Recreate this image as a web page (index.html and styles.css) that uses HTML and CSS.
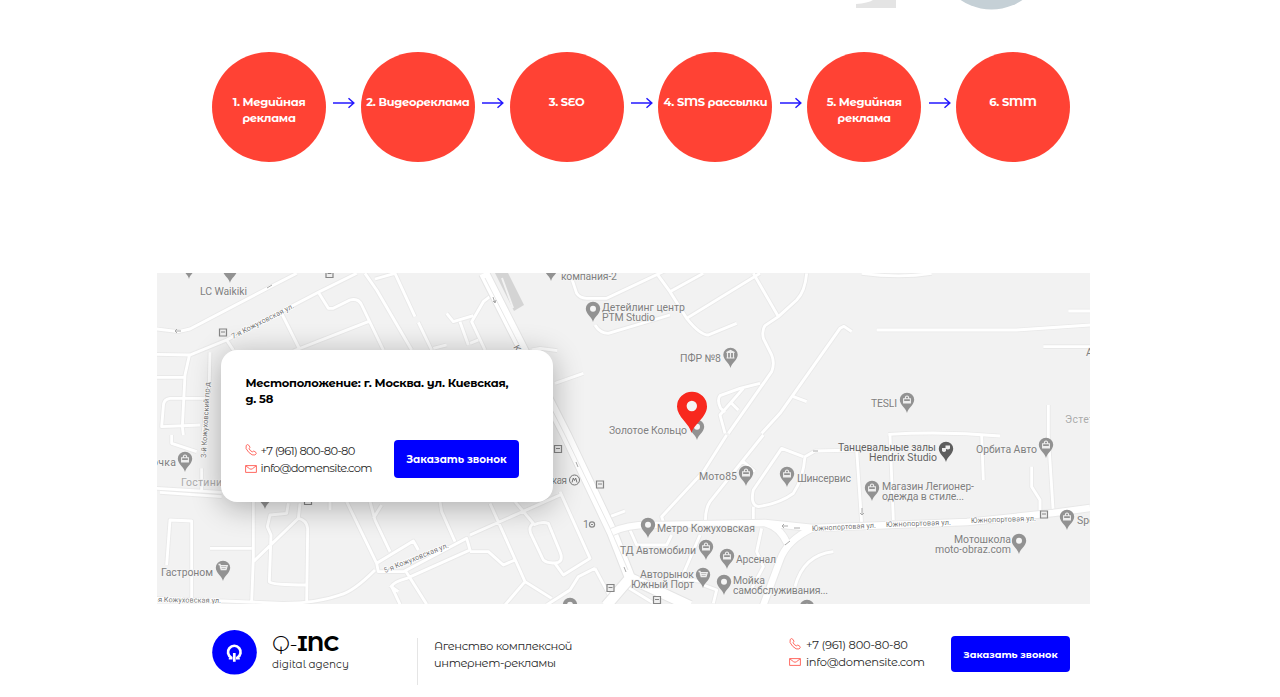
FILE: index.html
```html
<!DOCTYPE html>
<html lang="ru">
<head>
<meta charset="utf-8">
<title>Q-INC digital agency</title>
<link rel="stylesheet" href="styles.css">
</head>
<body>
<svg class="defs" width="0" height="0" aria-hidden="true">
  <symbol id="arrow" viewBox="0 0 22 12"><path d="M0 6H20.500M15.500 1.300L20.800 6L15.500 10.700" fill="none" stroke="#2418ff" stroke-width="1.500"/></symbol>
  <symbol id="phone" viewBox="0 0 12 12"><path d="M1.200 1.500Q2.600-.2 3.700 1.200L4.900 3Q5.200 3.800 4.100 4.600Q4.700 6.600 7.300 7.900Q8.300 6.800 9.100 7.200L11 8.500Q12 9.600 9.900 11Q7.400 12 3.700 8.300Q-.3 4.200 1.200 1.500Z" fill="none" stroke="#ff5950" stroke-width=".9"/></symbol>
  <symbol id="mail" viewBox="0 0 12 8"><path d="M.6.6H11.400V7.400H.6ZM.8.8L4.500 3.700Q6 4.800 7.500 3.700L11.200.8" fill="none" stroke="#ff5950" stroke-width=".9"/></symbol>
</svg>

<header class="artwork">
  <svg width="1280" height="12" viewBox="0 0 1280 12">
    <path d="M856 8V4Q868 3 873 0H896V8Z" fill="#e4e4e4"/>
    <circle cx="991.500" cy="-45.500" r="55" fill="#c5d0d6"/>
  </svg>
</header>

<section class="steps">
  <div class="step">1. Медийная<br>реклама</div>
  <svg class="arrow"><use href="#arrow"/></svg>
  <div class="step">2. Видеореклама</div>
  <svg class="arrow"><use href="#arrow"/></svg>
  <div class="step">3. SEO</div>
  <svg class="arrow"><use href="#arrow"/></svg>
  <div class="step">4. SMS рассылки</div>
  <svg class="arrow"><use href="#arrow"/></svg>
  <div class="step">5. Медийная<br>реклама</div>
  <svg class="arrow"><use href="#arrow"/></svg>
  <div class="step">6. SMM</div>
</section>

<section class="location">
  <svg class="map" viewBox="157 273 933 331">
    <defs>
      <g id="dot"><path d="M0 10C-1 5-7.200 2-7.200-3.200A7.200 7 0 0 1 7.200-3.200C7.200 2 1 5 0 10Z"/><circle cy="-3.300" r="3" fill="#f5f5f5"/></g>
      <g id="bag"><path d="M0 10C-1 5-7.200 2-7.200-3.200A7.200 7 0 0 1 7.200-3.200C7.200 2 1 5 0 10Z"/><path d="M-3.400-4.300H3.400V0H-3.400ZM-1.700-4.500Q-1.700-7 0-7Q1.700-7 1.700-4.500" fill="none" stroke="#eee" stroke-width="1.100"/><path d="M-3.500-2H3.500V0H-3.500Z" fill="#eee"/></g>
      <g id="cart"><path d="M0 10C-1 5-7.200 2-7.200-3.200A7.200 7 0 0 1 7.200-3.200C7.200 2 1 5 0 10Z"/><path d="M-4.500-6.500H-3L-1.800-1.500H3L4.200-5.300H-2.500V-3.500H3" fill="none" stroke="#eee" stroke-width="1.300"/></g>
      <g id="bank"><path d="M0 10C-1 5-7.200 2-7.200-3.200A7.200 7 0 0 1 7.200-3.200C7.200 2 1 5 0 10Z"/><path d="M-4-5.500L0-7.500L4-5.500ZM-3-5V0M0-5V0M3-5V0M-4 0H4" fill="#eee" stroke="#eee" stroke-width="1.200"/></g>
      <g id="masks"><path d="M0 10C-1 5-7.200 2-7.200-3.200A7.200 7 0 0 1 7.200-3.200C7.200 2 1 5 0 10Z"/><path d="M-.5-6.500H4V-3.500Q2-1.500-.5-3.500ZM-4-4H0V-1Q-2 .8-4-1Z" fill="#eee"/></g>
      <g id="bus"><path d="M-3.500-3.500H3.500V3.500H-3.500ZM-2-.5H2" fill="#eee" stroke="#858585" stroke-width="1.200"/></g>
      <g id="streets">
        <g transform="translate(150 265) scale(.33333)">
          <path d="M20 192L85 200L120 192L360 66L440 25M20 268L120 270L230 225L505 82L620 25M118 272L105 330L97 485L100 510M180 262L178 350L160 500M20 337H105M165 400H60Q40 402 40 425L35 485L150 480M505 82L535 130H550L600 105Q625 98 635 120L700 255M655 170L430 258M395 145L450 255M230 225L250 255M645 25L680 75L785 255M675 42L735 25L795 155M805 172L845 255M890 145L910 170L970 152M930 170L955 240M850 250L890 240"/>
        </g>
        <g transform="translate(470 265) scale(.33333)">
          <path d="M85 75L40 110L5 170L45 255M0 235L25 225M300 25L320 85Q330 100 350 100H410L590 15M560 25L600 80L650 160Q690 210 715 210L800 175M600 80L700 25M650 160L870 25M850 25L925 155M1010 25Q1005 80 980 105L925 155L885 182Q875 195 880 220L905 270Q915 295 905 320L775 505M375 180Q390 205 415 205L600 150M870 355L810 370L750 392Q740 405 752 430L765 442M820 370L750 450L765 505M780 410L805 435M875 505L930 445L1110 190L1122 184L1145 200M1010 410L970 395M185 255L210 250L262 257M255 355L340 325M1175 25Q1290 40 1385 25M1220 195H1640L1890 178M1795 138H1890M1720 245H1890M1735 420V510M1255 508Q1420 498 1590 513"/>
        </g>
        <g transform="translate(150 435) scale(.33333)">
          <path d="M20 160L215 172M30 172L215 185M155 100V165M65 0V25L140 50M310 200V370L305 500M180 340H305M50 390L60 255L125 258V490M20 490L400 505Q500 505 570 480Q610 470 675 405M450 205L445 250Q470 255 473 280L470 500M445 250L310 380M415 205L410 235L360 240L352 275L363 300L358 440Q365 450 470 450M590 200L680 385L685 410L760 410L950 310L960 345L770 430Q730 440 725 455L750 508M680 385L790 318L805 345M670 250L695 210M660 200L675 255L720 350M870 200L875 230L915 320M765 405L830 508M540 200V225M720 452L745 470"/>
        </g>
        <g transform="translate(470 435) scale(.33333)">
          <path d="M0 300L270 180M60 205L165 440L105 510M165 440L245 490M135 200L190 265Q175 275 182 295L220 375Q235 388 265 382Q280 375 270 350L235 265Q215 258 190 270M270 170L360 370L280 420L255 385M375 400L325 425L300 465L230 510M375 400L420 485M0 350H55L100 390L135 375M420 245L465 228M770 0L700 110L575 245L585 275M880 0L720 200Q706 220 706 260M820 80L855 110M1000 65L935 40L850 165Q840 210 865 215Q930 205 970 175Q1000 130 1005 65L1035 48L1160 45L1175 265M850 215V265M690 300L630 440M480 285L500 330L590 330L605 300M875 280L860 350L880 395L840 470M700 450L740 465L730 505M1260 0L1270 255M1535 0L1540 135M1735 0L1750 235M1685 95V155L1710 195V240M975 455Q1000 360 1090 350M620 430L700 440M470 455L560 510"/>
        </g>
      </g>
      <clipPath id="frame"><path d="M157 273H1090V604H157Z"/></clipPath>
    </defs>
    <path d="M157 273H1090V604H157Z" fill="#f2f2f2"/>
    <g clip-path="url(#frame)">
      <path d="M495 273H508L524 305L514 311Z" fill="#d4d4d4"/>
      <path d="M502 278L513 308M497 288L508 308" stroke="#f2f2f2" stroke-width="2"/>
      <g fill="none" stroke-linejoin="round">
        <use href="#streets" class="street-edge"/>
        <use href="#streets" class="street"/>
        <path class="avenue-edge" d="M484 273L566 435L612 532L630 578L690 606M630 578L606 606"/>
        <path class="avenue" d="M484 273L566 435L612 532L630 578L690 606M630 578L606 606"/>
        <path d="M485 278L565 435L610 528L628 570" stroke="#e8e8e8" stroke-width="1"/>
        <path class="main-edge" d="M612 532Q630 523 660 525L765 523L813 528L967 522L1053 513L1090 508M765 523Q780 527 787 543M813 528Q787 540 780 560L763 606"/>
        <path class="main" d="M612 532Q630 523 660 525L765 523L813 528L967 522L1053 513L1090 508M765 523Q780 527 787 543M813 528Q787 540 780 560L763 606"/>
      </g>
      <g fill="#929292">
        <use href="#dot" x="189" y="269"/><use href="#dot" x="230" y="273"/><use href="#dot" x="551" y="271"/>
        <use href="#dot" x="593" y="312"/><use href="#bank" x="730.500" y="358"/><use href="#dot" x="697" y="430"/>
        <use href="#bag" x="907" y="403"/><use href="#bag" x="1046" y="448"/>
        <use href="#masks" x="946" y="452" fill="#5e5e5e"/>
        <use href="#bag" x="872" y="491"/><use href="#bag" x="787" y="477"/><use href="#bag" x="746" y="476"/>
        <use href="#dot" x="648" y="528"/><use href="#bag" x="706" y="550"/><use href="#bag" x="727" y="559"/>
        <use href="#cart" x="703" y="578"/><use href="#dot" x="724" y="585"/><use href="#dot" x="1019" y="544"/>
        <use href="#bag" x="1067" y="520"/><use href="#bag" x="185" y="462"/><use href="#cart" x="223" y="571"/>
        <use href="#dot" x="265" y="499"/><use href="#dot" x="570" y="608"/><use href="#dot" x="807" y="610"/>
      </g>
      <use href="#bus" x="223" y="332.500"/><use href="#bus" x="329.500" y="274"/><use href="#bus" x="558" y="449"/><use href="#bus" x="600" y="484.500"/><use href="#bus" x="308" y="501"/><use href="#bus" x="610.500" y="588"/><use href="#bus" x="657" y="600"/><use href="#bus" x="1044" y="514.500"/>
      <path d="M175 331H181M177 329L175 331L177 333M267 288L272 285M493 297L495 303M493 301L495 303L496 300M576 462L578 467M624 567L626 572M813 451H818M862 508V515M860 513L862 515L864 513M782 526H788M784 524L782 526L784 528M794 528H800M785 545L790 541" fill="none" stroke="#aaa"/>
      <g class="labels">
        <text x="200" y="295" textLength="47">LC Waikiki</text>
        <text x="561" y="280" textLength="56">компания-2</text>
        <text x="602" y="311" textLength="83">Детейлинг центр</text>
        <text x="602" y="321" textLength="53">PTM Studio</text>
        <text x="680" y="362" textLength="41">ПФР №8</text>
        <text x="609" y="434" textLength="78">Золотое Кольцо</text>
        <text x="871" y="407" textLength="26">TESLI</text>
        <text x="1065" y="423" textLength="29" class="faint">Эстет</text>
        <text x="1086" y="356">А</text>
        <text x="838" y="451" textLength="98" class="dark">Танцевальные залы</text>
        <text x="869" y="461" textLength="68" class="dark">Hendrix Studio</text>
        <text x="976" y="453" textLength="61">Орбита Авто</text>
        <text x="699" y="480" textLength="38">Мото85</text>
        <text x="797" y="482" textLength="54">Шинсервис</text>
        <text x="882" y="490" textLength="92">Магазин Легионер-</text>
        <text x="882" y="500" textLength="82">одежда в стиле...</text>
        <text x="657" y="532" textLength="98">Метро Кожуховская</text>
        <text x="620" y="554" textLength="76">ТД Автомобили</text>
        <text x="736" y="563" textLength="40">Арсенал</text>
        <text x="640" y="578" textLength="54">Авторынок</text>
        <text x="631" y="588" textLength="63">Южный Порт</text>
        <text x="733" y="584" textLength="32">Мойка</text>
        <text x="733" y="594" textLength="95">самобслуживания...</text>
        <text x="954" y="543" textLength="57">Мотошкола</text>
        <text x="935" y="553" textLength="76">moto-obraz.com</text>
        <text x="1077" y="524">Spe</text>
        <text x="152" y="466" textLength="24">очка</text>
        <text x="181" y="486" textLength="41" class="faint">Гостини</text>
        <text x="161" y="576" textLength="52">Гастроном</text>
        <text x="547" y="484" textLength="20">ская</text>
        <text x="583" y="528">1</text>
      </g>
      <circle cx="574.500" cy="480" r="5" fill="#f2f2f2" stroke="#777"/><path d="M572 482.500L573.300 478L574.500 480.500L575.700 478L577 482.500" fill="none" stroke="#777"/>
      <circle cx="592" cy="524.500" r="2.600" fill="none" stroke="#888" stroke-width="1.200"/><path d="M591 524.500H593" stroke="#888"/>
      <g class="road-names">
        <text transform="translate(233 339) rotate(-27)" textLength="69">7-я Кожуховская ул.</text>
        <text transform="translate(206 458) rotate(-87)" textLength="76">3-й Кожуховский пр-д</text>
        <text transform="translate(385 573) rotate(-22)" textLength="69">5-я Кожуховская ул.</text>
        <text transform="translate(158 602) rotate(1)" textLength="63">я Кожуховская ул.</text>
        <text transform="translate(812 531) rotate(-3)" textLength="64">Южнопортовая ул.</text>
        <text transform="translate(886 527) rotate(-2)" textLength="65">Южнопортовая ул.</text>
        <text transform="translate(971 523) rotate(-2)" textLength="65">Южнопортовая ул.</text>
        <text transform="translate(513 347) rotate(62)" font-size="9">К</text>
      </g>
      <path d="M691.500 433C690 424 677 417 677 406.500A15 14.700 0 0 1 707 406.500C707 417 694 424 691.500 433Z" fill="#f8281e"/>
      <circle cx="691.800" cy="406" r="5.200" fill="#f5f5f5"/>
    </g>
  </svg>
  <div class="card">
    <h2 class="address">Местоположение: г. Москва. ул. Киевская,<br>д. 58</h2>
    <div class="card-row">
      <ul class="contacts tight">
        <li><svg class="phone"><use href="#phone"/></svg><span>+7 (961) 800-80-80</span></li>
        <li><svg class="mail"><use href="#mail"/></svg><span>info@domensite.com</span></li>
      </ul>
      <button class="call large">Заказать звонок</button>
    </div>
  </div>
</section>

<footer class="footer">
  <svg class="logo" viewBox="0 0 45 45"><circle cx="22.500" cy="22.300" r="22.300" fill="#00f"/><path d="M19.300 27.600A6.300 6.300 0 1 1 25.300 27.600M22.300 23V31.700M16.800 28.100H20.500M24 28.100H27.800" fill="none" stroke="#fff" stroke-width="2.700"/></svg>
  <div class="brand"><div class="name">Q-<b>INC</b></div><div class="tagline">digital agency</div></div>
  <p class="about">Агенство комплексной<br>интернет-рекламы</p>
  <ul class="contacts">
    <li><svg class="phone"><use href="#phone"/></svg><span>+7 (961) 800-80-80</span></li>
    <li><svg class="mail"><use href="#mail"/></svg><span>info@domensite.com</span></li>
  </ul>
  <button class="call">Заказать звонок</button>
</footer>
</body>
</html>
```

FILE: styles.css
```css
* { box-sizing: border-box; }
body { margin: 0; height: 697px; overflow: hidden; background: #fff; color: #2a2a2a; font-family: "Montserrat Alternates", Montserrat, Inter, sans-serif; }
.defs { position: absolute; }
.artwork, .artwork svg { display: block; height: 12px; }
.steps { display: flex; justify-content: space-between; width: 858px; margin: 40px 0 0 212px; }
.step { width: 114px; height: 110px; padding-top: 41.5px; border-radius: 50%; background: #ff4234; color: #fff; text-align: center; font-size: 11.5px; letter-spacing: -.3px; line-height: 16.5px; font-weight: 700; white-space: nowrap; }
.arrow { width: 22px; height: 12px; margin: 45px -1px 0 1px; }
.location { display: grid; width: 933px; height: 331px; margin: 111px 0 0 157px; }
.map, .card { grid-area: 1 / 1; }
.map { width: 933px; height: 331px; }
.street-edge { stroke: #e9e9e9; stroke-width: 14; }
.street { stroke: #fff; stroke-width: 8.5; }
.avenue-edge { stroke: #e4e4e4; stroke-width: 12; }
.avenue { stroke: #fff; stroke-width: 10; }
.main-edge { stroke: #e8e8e8; stroke-width: 8.5; }
.main { stroke: #fff; stroke-width: 6.5; }
.labels { font: 10.5px Roboto, sans-serif; fill: #808080; stroke: #f5f5f5; stroke-width: 1.5px; paint-order: stroke; }
.labels .dark { fill: #626262; }
.labels .faint { fill: #aaa; }
.road-names { font: 7.5px Roboto, sans-serif; fill: #777; stroke: #fff; stroke-width: 1.5px; paint-order: stroke; }
.card { z-index: 1; width: 332px; height: 152px; margin: 77px 0 0 64px; padding: 24.5px 34px 24px 24.5px; border-radius: 16px; background: #fff; box-shadow: 0 5px 30px rgba(0, 0, 0, .3); }
.address { margin: 0; color: #000; font-size: 11.5px; letter-spacing: -.23px; line-height: 16.5px; font-weight: 700; white-space: nowrap; }
.card-row { display: flex; justify-content: space-between; margin-top: 32.5px; }
.contacts { margin: 0; padding: 2px 0 0; list-style: none; font-size: 11.5px; letter-spacing: -.27px; line-height: 17px; white-space: nowrap; }
.contacts li { display: flex; align-items: center; gap: 4px; }
.contacts.tight { margin-left: -1px; padding-top: 3px; letter-spacing: -.68px; }
.phone { width: 12px; height: 12px; margin-top: -3px; }
.mail { width: 12px; height: 8px; }
.call { width: 119px; height: 36px; padding: 0; border: 0; border-radius: 4px; background: #00f; color: #fff; font: 700 9.75px "Montserrat Alternates", Montserrat, Inter, sans-serif; white-space: nowrap; }
.call.large { width: 125px; height: 38px; font-size: 10.4px; }
.footer { display: flex; width: 858px; margin: 26px 0 0 212px; }
.logo { width: 45px; height: 45px; }
.brand { width: 145px; margin-left: 15px; white-space: nowrap; }
.name { color: #000; font-size: 21.5px; letter-spacing: -.6px; line-height: 26px; font-weight: 300; }
.name b { font-weight: 700; }
.tagline { margin-top: 1px; font-size: 10.4px; line-height: 16px; }
.about { width: 372px; height: 47px; margin: 8px 0 0; padding: 0 0 0 16px; border-left: 1px solid #e5e5e5; font-size: 11.5px; letter-spacing: -.37px; line-height: 16.5px; white-space: nowrap; }
.footer .contacts { width: 162px; padding-top: 7px; line-height: 16.5px; }
.footer .contacts li { gap: 5px; }
.footer .call { margin-top: 6px; }
```
